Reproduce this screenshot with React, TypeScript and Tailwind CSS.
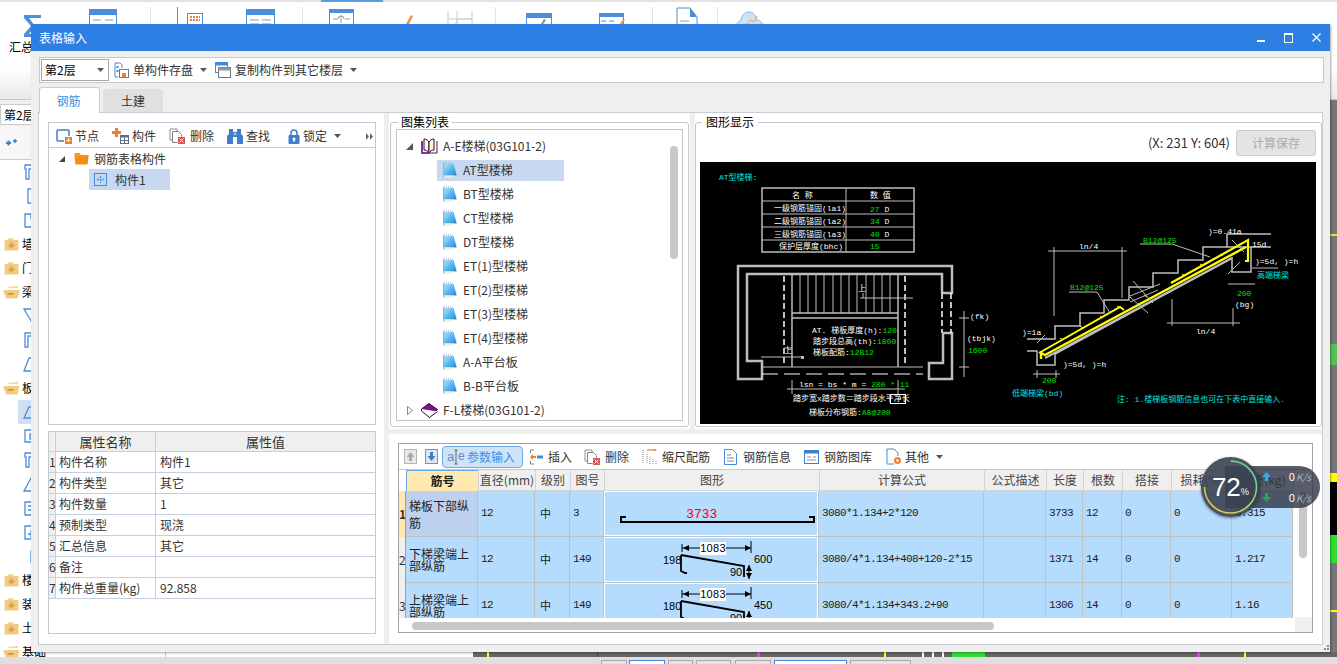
import type { ReactNode } from 'react';

const sans = "font-['Noto_Sans_CJK_SC',sans-serif]";

const Arrow = ({ className = '' }: { className?: string }) => (
  <svg width="7" height="4" viewBox="0 0 7 4" className={className}>
    <path d="M0 0h7L3.5 4z" fill="#555" />
  </svg>
);

const FolderPlus = () => (
  <svg width="15" height="14" viewBox="0 0 15 14" className="shrink-0">
    <path d="M4 1h5l1 2H4z" fill="#f3d9a4" />
    <rect x="0.500" y="3" width="14" height="10.500" fill="#f2cb83" />
    <path d="M6.500 5.500h2v2h2v2h-2v2h-2v-2h-2v-2h2z" fill="#d8a54c" />
  </svg>
);

const FolderMinus = () => (
  <svg width="17" height="14" viewBox="0 0 17 14" className="shrink-0">
    <path d="M5 2l10-1.500V3H5z" fill="#f3d9a4" />
    <path d="M0 5h16.500l-2 8.500H3z" fill="#f2cb83" />
    <rect x="4.500" y="8" width="6" height="2" fill="#d19a3c" />
  </svg>
);

const BlueTreeIcon = ({ d }: { d: string }) => (
  <svg width="16" height="16" viewBox="0 0 16 16" className="shrink-0">
    <path d={d} fill="none" stroke="#4a8fdc" strokeWidth="1.300" />
  </svg>
);

const Note = () => (
  <svg width="14" height="16" viewBox="0 0 14 16" className="shrink-0">
    <defs>
      <linearGradient id="noteFill" x1="0" y1="0" x2="1" y2="1">
        <stop offset="0" stopColor="#a6e6f8" />
        <stop offset="0.500" stopColor="#5ab8ec" />
        <stop offset="1" stopColor="#2a86d4" />
      </linearGradient>
    </defs>
    <path d="M1 2h9.500l3 10.500v1H1z" fill="url(#noteFill)" />
    <path d="M0.500 13.500h10l-1 2h-9z" fill="#e4ebef" />
    <path d="M1 1h9.500" stroke="#8fa3ad" strokeDasharray="1 1" />
    <path d="M0.500 1v14.500" stroke="#9fb2bb" />
  </svg>
);

const SaveIcon = () => (
  <svg width="15" height="16" viewBox="0 0 15 16">
    <path d="M1 1h5l2 2v3" fill="none" stroke="#3f8bdc" />
    <path d="M1 1v14h3" fill="none" stroke="#3f8bdc" />
    <rect x="2.500" y="4" width="2" height="2" fill="#3f8bdc" />
    <rect x="2.500" y="8" width="2" height="2" fill="#3f8bdc" />
    <rect x="5.500" y="7.500" width="9" height="8" fill="#fff" stroke="#6b7a8a" />
    <rect x="8" y="11" width="4" height="4" fill="#f0812a" />
  </svg>
);

const CopyIcon = () => (
  <svg width="16" height="16" viewBox="0 0 16 16">
    <rect x="0.500" y="0.500" width="12" height="10" fill="#fff" stroke="#3f8bdc" />
    <rect x="0.500" y="0.500" width="12" height="3" fill="#3f8bdc" />
    <rect x="3.500" y="5.500" width="12" height="10" fill="#fff" stroke="#6b7a8a" />
    <rect x="3.500" y="5.500" width="12" height="3" fill="#8b98a6" />
  </svg>
);

const NodeIcon = () => (
  <svg width="16" height="16" viewBox="0 0 16 16">
    <rect x="1" y="2" width="12" height="11" rx="1" fill="none" stroke="#3f7fc8" strokeWidth="1.500" />
    <rect x="8" y="8" width="8" height="8" fill="#fff" />
    <rect x="9" y="9" width="7" height="7" fill="#f0812a" />
    <path d="M12.500 10v4M10.500 12.500h4" stroke="#fff" />
  </svg>
);

const PartIcon = () => (
  <svg width="17" height="16" viewBox="0 0 17 16">
    <path d="M3 0h3v3h3v3H6v3H3V6H0V3h3z" fill="#f0812a" />
    <rect x="8.500" y="7.500" width="8" height="8" fill="#fff" stroke="#5a6f8a" />
    <rect x="8.500" y="7.500" width="8" height="2" fill="#5a6f8a" />
    <path d="M12.500 9.500v6M8.500 12.500h8" stroke="#5a6f8a" />
  </svg>
);

const DeleteIcon = () => (
  <svg width="16" height="16" viewBox="0 0 16 16">
    <path d="M1 1h7v2M1 1v11h2" fill="none" stroke="#8a939c" />
    <path d="M3.500 3.500h6l3 3v2M3.500 3.500v11h5" fill="#fff" stroke="#7b8590" />
    <rect x="9" y="9" width="7" height="7" fill="#d9534f" />
    <path d="M10.500 10.500l4 4M14.500 10.500l-4 4" stroke="#fff" />
  </svg>
);

const Binoculars = () => (
  <svg width="16" height="15" viewBox="0 0 16 15">
    <path d="M2 0h4v3h4V0h4v5l2 2v8h-6V8H6v7H0V7l2-2z" fill="#3f7fc8" />
    <rect x="6.500" y="4" width="3" height="2" fill="#9fc1e8" />
  </svg>
);

const Lock = () => (
  <svg width="12" height="15" viewBox="0 0 12 15">
    <path d="M3 6V4a3 3 0 0 1 6 0v2" fill="none" stroke="#3f7fc8" strokeWidth="1.600" />
    <rect x="0.500" y="6" width="11" height="9" rx="1" fill="#3f7fc8" />
    <circle cx="6" cy="10" r="1.500" fill="#fff" />
    <rect x="5.400" y="10" width="1.200" height="3" fill="#fff" />
  </svg>
);

const PartNode = () => (
  <svg width="13" height="13" viewBox="0 0 13 13">
    <rect x="0.500" y="0.500" width="12" height="12" fill="none" stroke="#3f8bdc" />
    <path d="M6.500 3v7M3 6.500h7" stroke="#3f8bdc" strokeDasharray="2 1" />
    <path d="M5 4.500L3 6.500l2 2M8 4.500l2 2-2 2" fill="none" stroke="#7fb2e8" />
  </svg>
);

const OrangeFolder = () => (
  <svg width="15" height="13" viewBox="0 0 15 13">
    <path d="M0.500 1h5l1.500 2h7.500v2H0.500z" fill="#f49a2c" />
    <path d="M0.500 4.500h14l-1 8h-12z" fill="#f58a14" />
  </svg>
);

const OpenBook = () => (
  <svg width="17" height="17" viewBox="0 0 17 17">
    <path d="M1 3v12h15V3" fill="#fff" stroke="#5c1466" />
    <path d="M3 1c2 0 4 1 5 3v11c-1-2-3-3-5-3z" fill="#fff" stroke="#2a0a30" />
    <path d="M13 1c-2 0-4 1-5 3v11c1-2 3-3 5-3z" fill="#fff7c8" stroke="#2a0a30" />
    <path d="M1 3v12h7" fill="none" stroke="#7a1a8a" strokeWidth="1.500" />
  </svg>
);

const ClosedBook = () => (
  <svg width="17" height="15" viewBox="0 0 17 15">
    <path d="M0.500 6L8 0.500l8.500 6-8 8z" fill="#7d1385" stroke="#3a0a40" />
    <path d="M0.500 6v2l8 6.500 8-6" fill="#fff" stroke="#3a0a40" />
  </svg>
);

const ParamIcon = () => (
  <svg width="20" height="16" viewBox="0 0 20 16">
    <text x="0" y="12" fontSize="13" fill="#5a8fc8" fontFamily="Liberation Sans">a</text>
    <text x="11" y="11" fontSize="12" fill="#5a8fc8" fontFamily="Liberation Sans">e</text>
    <path d="M7.500 1h3M9 1v14M7.500 15h3" stroke="#666" fill="none" />
  </svg>
);

const InsertIcon = () => (
  <svg width="14" height="16" viewBox="0 0 14 16">
    <path d="M5 1H1.500v3M5 15H1.500v-3" fill="none" stroke="#7b8590" />
    <path d="M1 8l3-3v2h3v2H4v2z" fill="#f0812a" />
    <rect x="8" y="6.500" width="6" height="3" fill="#3f8bdc" />
  </svg>
);

const ScaleIcon = () => (
  <svg width="16" height="15" viewBox="0 0 16 15">
    <path d="M5 1h9" stroke="#f0812a" strokeWidth="1.200" />
    <path d="M12 0l3 1-3 1z" fill="#f0812a" />
    <path d="M1 1v14M5 5v10M8 8v7M11 10v5M14 12v3" stroke="#7b8590" strokeDasharray="1 1" />
  </svg>
);

const DocIcon = () => (
  <svg width="13" height="16" viewBox="0 0 13 16">
    <path d="M0.500 0.500h8l4 4v11h-12z" fill="#fff" stroke="#3f8bdc" />
    <path d="M3 6h4M3 9h7M3 12h7" stroke="#7b8590" />
  </svg>
);

const LibraryIcon = () => (
  <svg width="15" height="14" viewBox="0 0 15 14">
    <rect x="0.500" y="0.500" width="14" height="13" fill="#fff" stroke="#3f7fc8" />
    <rect x="0.500" y="0.500" width="14" height="3" fill="#3f7fc8" />
    <path d="M3 7h4M3 10h9" stroke="#8a939c" />
    <path d="M9 7h3" stroke="#f0812a" />
  </svg>
);

const OtherIcon = () => (
  <svg width="16" height="17" viewBox="0 0 16 17">
    <path d="M8 16H1V1h7l4 4v3" fill="#fff" stroke="#3f8bdc" />
    <circle cx="11.500" cy="12.500" r="3.500" fill="#f0812a" />
    <circle cx="11.500" cy="12.500" r="1.300" fill="#fff" />
  </svg>
);

const MoveIcon = ({ dir, active }: { dir: 'up' | 'down'; active?: boolean }) => (
  <svg width="13" height="15" viewBox="0 0 13 15">
    <rect x="0.500" y="0.500" width="12" height="14" fill={active ? '#dbe7f3' : '#e8e8e8'} stroke={active ? '#7b94ad' : '#b5b5b5'} />
    <path
      d={dir === 'up' ? 'M6.500 3L10.500 8H8v4H5V8H2.500z' : 'M6.500 12L10.500 7H8V3H5v4H2.500z'}
      fill={active ? '#3f7fc8' : '#a8a8a8'}
    />
  </svg>
);

const RibbonIcon = ({ children, w, className = '' }: { children: ReactNode; w: number; className?: string }) => (
  <svg width={w} height="24" viewBox={`0 0 ${w} 24`} className={className}>
    {children}
  </svg>
);

const Tool = ({ icon, label, className = '' }: { icon: ReactNode; label: string; className?: string }) => (
  <div className={`flex items-center shrink-0 ${className}`}>
    {icon}
    <span className="text-[12px] text-[#333] whitespace-nowrap">{label}</span>
  </div>
);

const treeIcons = [
  'M2 1h12v4H6v10H3V5H2z',
  'M5 1h8v6H9v8H5z',
  'M2 2h6v4h6v9H2z',
];

const LeftTree = () => {
  const rows: { folder?: 'plus' | 'minus'; label?: string; icon?: string; active?: boolean }[] = [
    { icon: treeIcons[0] }, { icon: treeIcons[1] }, { icon: treeIcons[2] },
    { folder: 'plus', label: '墙体' }, { folder: 'plus', label: '门窗' }, { folder: 'minus', label: '梁' },
    { icon: 'M1 1h14L9 9v6L7 11z' }, { icon: 'M2 1h13v3H5v11H2z' }, { icon: 'M1 15L6 2h8v13z' },
    { folder: 'minus', label: '板' },
    { icon: 'M1 14L6 3h9v11z', active: true }, { icon: 'M2 2h12v12H2zM7 6h6v5H7z' }, { icon: treeIcons[0] },
    { icon: 'M1 15L8 2h6v13z' }, { icon: 'M2 2h12v13H2zM5 6h8M5 10h8' }, { icon: 'M2 2h12v13H2zM8 6v8M5 10h8' },
    { icon: 'M8 3h4v11H8z' },
    { folder: 'plus', label: '楼梯' }, { folder: 'plus', label: '装修' }, { folder: 'plus', label: '土方' },
    { folder: 'minus', label: '基础' },
  ];
  return (
    <div className="flex flex-col">
      {rows.map((r, i) => (
        <div key={i} className="h-[24px] flex items-center shrink-0">
          {r.folder ? (
            <div className="flex items-center">
              <div className="w-[22px] flex justify-center">{r.folder === 'plus' ? <FolderPlus /> : <FolderMinus />}</div>
              <span className="text-[12px] text-black">{r.label}</span>
            </div>
          ) : (
            <div className={`ml-[18px] h-[24px] w-[60px] pl-[5px] flex items-center ${r.active ? 'bg-[#cfe0f5]' : ''}`}>
              <BlueTreeIcon d={r.icon ?? ''} />
            </div>
          )}
        </div>
      ))}
    </div>
  );
};

const Background = () => (
  <div className="absolute inset-0 flex flex-col bg-white">
    <div className="h-[100px] shrink-0 flex flex-col bg-gradient-to-b from-white from-70% to-[#e8e8e8] border-b border-[#c8c8c8]">
      <div className="h-[2px] shrink-0 bg-[#e2e2e2] flex">
        <div className="ml-[321px] w-[62px] bg-[#5a9be6]" />
      </div>
      <div className="flex items-start h-[30px] pt-[5px]">
        <svg width="20" height="24" viewBox="0 0 20 24" className="ml-[23px] mt-[7px]">
          <path d="M1 1h17v3H6l6 8-6 8h12v3H1v-3l7-8-7-8z" fill="#4a8fdc" />
        </svg>
        <RibbonIcon w={28} className="ml-[46px]">
          <rect x="0.500" y="2.500" width="27" height="20" fill="#fff" stroke="#4a8fdc" />
          <rect x="0" y="2" width="28" height="6" fill="#4a8fdc" />
          <path d="M4 13h8M16 13h8" stroke="#999" />
        </RibbonIcon>
        <div className="ml-[33px] w-px h-[30px] bg-[#e4e4e4]" />
        <div className="ml-[26px] w-px h-[20px] bg-[#4a8fdc]" />
        <RibbonIcon w={16} className="ml-[9px]">
          <rect x="0.500" y="6.500" width="15" height="17" fill="#fff" stroke="#4a8fdc" />
          <path d="M3 10h10M3 13h10" stroke="#e8853a" strokeWidth="2" strokeDasharray="2 1" />
        </RibbonIcon>
        <RibbonIcon w={29} className="ml-[43px]">
          <rect x="0.500" y="2.500" width="28" height="20" fill="#fff" stroke="#4a8fdc" />
          <rect x="0" y="2" width="29" height="6" fill="#4a8fdc" />
          <path d="M4 13h9M16 13h9M4 17h9M16 17h9" stroke="#999" />
        </RibbonIcon>
        <div className="ml-[27px] w-px h-[30px] bg-[#e4e4e4]" />
        <RibbonIcon w={25} className="ml-[26px]">
          <rect x="0.500" y="2.500" width="24" height="20" fill="#fff" stroke="#4a8fdc" />
          <rect x="0" y="2" width="25" height="4" fill="#4a8fdc" />
          <path d="M4 12h5M16 12h5M12 8v8M9 12a3 3 0 0 1 6 0" fill="none" stroke="#999" />
        </RibbonIcon>
        <RibbonIcon w={8} className="ml-[51px]">
          <path d="M1 17l5-9 2 1-4 8z" fill="#f0923f" />
        </RibbonIcon>
        <RibbonIcon w={26} className="ml-[34px]">
          <path d="M1 4v20M10 4v20M25 4v20M1 12h24M5 24l6-12h14" stroke="#ccc" fill="none" />
        </RibbonIcon>
        <div className="ml-[22px] w-px h-[30px] bg-[#e4e4e4]" />
        <RibbonIcon w={26} className="ml-[30px]">
          <rect x="0.500" y="6.500" width="25" height="18" fill="#fff" stroke="#4a8fdc" />
          <rect x="0" y="6" width="26" height="5" fill="#4a8fdc" />
          <path d="M15 17l3-5 2 1-3 4z" fill="#6aa84f" />
        </RibbonIcon>
        <RibbonIcon w={27} className="ml-[47px]">
          <rect x="0.500" y="6.500" width="24" height="18" fill="#fff" stroke="#4a8fdc" />
          <rect x="0" y="6" width="25" height="4" fill="#4a8fdc" />
          <path d="M2 14h5M10 14h5" stroke="#4a8fdc" />
          <path d="M21 17l3-5 2 1-3 5z" fill="#f0923f" />
        </RibbonIcon>
        <div className="ml-[26px] w-px h-[30px] bg-[#e4e4e4]" />
        <RibbonIcon w={22} className="ml-[23px]">
          <path d="M1 1h13l7 9v14H1z" fill="#fff" stroke="#4a8fdc" />
          <path d="M14 1l7 9h-7z" fill="#4a8fdc" />
          <path d="M4 14h9" stroke="#999" />
        </RibbonIcon>
        <div className="ml-[19px] w-px h-[30px] bg-[#e4e4e4]" />
        <RibbonIcon w={30} className="ml-[17px]">
          <path d="M2 22c-2-4 1-8 4-8 0-6 4-9 8-9 5 0 7 4 8 8 4 0 7 5 6 9z" fill="#cfe2f7" stroke="#8ab8ea" />
          <path d="M12 17l4-4 3 2 3-6" fill="none" stroke="#f0a060" />
        </RibbonIcon>
      </div>
      <div className="ml-[9px] mt-[6px] text-[12px] text-black">汇总</div>
    </div>
    <div className="flex-1 flex min-h-0 overflow-hidden">
      <div className="w-[166px] shrink-0 flex flex-col border-r border-[#c8c8c8]">
        <div className="h-[26px] shrink-0 flex items-center pt-[2px] bg-[#f0f0f0]">
          <div className="w-[60px] h-[21px] bg-white border border-[#ccc] pl-[3px] text-[12px] leading-[19px] text-black">第2层</div>
        </div>
        <div className="h-[34px] shrink-0 flex items-center pl-[4px] border-b border-[#ccc] bg-[#f7f7f7]">
          <svg width="14" height="10" viewBox="0 0 14 10">
            <path d="M2 5h5M4.500 2.500v5" stroke="#3f7fc8" strokeWidth="2" />
            <path d="M9 3h4M11 1v4" stroke="#3f7fc8" strokeWidth="1.500" />
          </svg>
        </div>
        <LeftTree />
      </div>
      <div className="flex-1 min-w-0 ml-[6px] flex flex-col">
        <div className="flex-1 flex justify-end">
          <div className="w-[7px] flex flex-col bg-[#777]">
            <div className="h-[134px] shrink-0" />
            <div className="h-[2px] shrink-0 bg-[#e6e04a]" />
            <div className="h-[108px] shrink-0" />
            <div className="h-[21px] shrink-0 bg-[#58c058]" />
            <div className="h-[108px] shrink-0" />
            <div className="h-[9px] shrink-0 bg-[#ffff00]" />
            <div className="h-[53px] shrink-0 bg-black" />
            <div className="h-[18px] shrink-0 bg-[#33dd33]" />
            <div className="h-[10px] shrink-0 bg-[#33dd33]" />
            <div className="h-[47px] shrink-0" />
            <div className="h-[2px] shrink-0 bg-[#ffff00]" />
          </div>
        </div>
        <div className="h-[5px] shrink-0 flex">
          <div className="w-[301px] bg-white" />
          <div className="flex-1 flex bg-[#666]">
            <div className="ml-[14px] w-[2px] bg-[#ffff33]" />
            <div className="ml-[108px] w-px bg-[#a02020]" />
            <div className="ml-[159px] w-[3px] bg-[#ff33ff]" />
            <div className="ml-[124px] w-[2px] bg-[#ffff33]" />
            <div className="ml-[36px] w-[2px] bg-white" />
            <div className="ml-[8px] w-[2px] bg-white" />
            <div className="ml-[8px] w-[2px] bg-white" />
            <div className="ml-[8px] w-[33px] bg-[#33dd33]" />
            <div className="ml-[212px] w-[3px] bg-[#ff33ff]" />
            <div className="ml-[44px] w-[2px] bg-[#ffff33]" />
          </div>
        </div>
      </div>
    </div>
    <div className="h-[7px] shrink-0 bg-[#dfdfdf] flex items-end pt-[3px] overflow-hidden">
      <div className="ml-[601px] w-[26px] h-[4px] bg-[#e4e4e4] border border-b-0 border-[#aaa]" />
      <div className="ml-[2px] w-[36px] h-[4px] bg-white border border-b-0 border-[#3f8bdc]" />
      <div className="ml-[3px] w-[25px] h-[4px] bg-[#e4e4e4] border border-b-0 border-[#aaa]" />
      <div className="ml-[3px] w-[35px] h-[4px] bg-[#e4e4e4] border border-b-0 border-[#aaa]" />
      <div className="ml-[4px] w-[36px] h-[4px] bg-[#e4e4e4] border border-b-0 border-[#aaa]" />
      <div className="ml-[3px] w-[73px] h-[4px] bg-white border border-b-0 border-[#3f8bdc]" />
      <div className="ml-[3px] w-[61px] h-[4px] bg-[#e4e4e4] border border-b-0 border-[#aaa]" />
    </div>
  </div>
);

const CadDrawing = () => {
  const g = '#bdbdbd';
  const cad = { fontFamily: '"Liberation Mono","Noto Sans CJK SC",monospace', fontSize: 8 };
  const treads = [100, 108, 116, 124, 133, 141, 149, 157, 166, 174, 182, 190];
  return (
    <svg width="616" height="262" viewBox="0 0 616 262" className="block bg-black" style={cad}>
      <text x="19" y="18" fill="#00e5e5">AT型楼梯:</text>
      <rect x="62" y="26" width="152" height="64" fill="none" stroke={g} strokeWidth="1.500" />
      <path d="M146 26v64M62 39h152M62 52h152M62 65h152M62 78h152" stroke={g} fill="none" />
      <text x="92" y="36" fill="#fff">名  称</text>
      <text x="170" y="36" fill="#fff">数  值</text>
      <text x="74" y="49" fill="#fff">一级钢筋锚固(la1)</text>
      <text x="170" y="50" fill="#00e000">27 <tspan fill="#fff">D</tspan></text>
      <text x="74" y="62" fill="#fff">二级钢筋锚固(la2)</text>
      <text x="170" y="62" fill="#00e000">34 <tspan fill="#fff">D</tspan></text>
      <text x="74" y="75" fill="#fff">三级钢筋锚固(la3)</text>
      <text x="170" y="75" fill="#00e000">40 <tspan fill="#fff">D</tspan></text>
      <text x="79" y="87" fill="#fff">保护层厚度(bhc)</text>
      <text x="170" y="87" fill="#00e000">15</text>

      <g fill="none" stroke={g} strokeWidth="2.500">
        <path d="M242 131H252V104H38V217H62V199H47V112H242V131" />
        <path d="M243 171H252V217H229V201H243V171" />
      </g>
      <path d="M242 131v40M251 131v40M84 114v90M205 114v90" stroke="#fff" strokeWidth="1.500" strokeDasharray="6 3" />
      <path d="M92 112v93M198 112v93" stroke={g} strokeWidth="1.500" />
      <path d="M92 151h106M92 156h106" stroke={g} strokeWidth="1.500" />
      {treads.map(x => (
        <path key={x} d={`M${x} 112v39`} stroke={g} />
      ))}
      <path d="M62 205h161" stroke={g} />
      <path d="M62 212h161" stroke="#fff" strokeDasharray="16 6" />
      <path d="M160 136h53M163 131v5M61 195h42M84 186h8" stroke={g} />
      <text x="158" y="129" fill="#fff">上</text>
      <text x="84" y="191" fill="#fff">上</text>
      <rect x="101" y="194" width="3" height="3" fill={g} />
      <text x="112" y="171" fill="#fff">AT. 梯板厚度(h):<tspan fill="#00e000">120</tspan></text>
      <text x="113" y="182" fill="#fff">踏步段总高(th):<tspan fill="#00e000">1800</tspan></text>
      <text x="113" y="193" fill="#fff">梯板配筋:<tspan fill="#00e000">12B12</tspan></text>
      <path d="M264 149v66M259 156h10M259 205h10" stroke={g} />
      <text x="270" y="157" fill="#fff">(fk)</text>
      <text x="267" y="179" fill="#fff">(tbjk)</text>
      <text x="268" y="191" fill="#00e000">1600</text>
      <path d="M92 218v14M198 218v14M87 227h118" stroke={g} />
      <text x="99" y="225" fill="#fff">lsn = bs * m = <tspan fill="#00e000">280 * 11</tspan></text>
      <text x="93" y="239" fill="#fff">踏步宽x踏步数＝踏步段水平净长</text>
      <rect x="190.500" y="232.500" width="15" height="9" fill="none" stroke="#fff" />
      <text x="109" y="253" fill="#fff">梯板分布钢筋:<tspan fill="#00e000">A8@200</tspan></text>

      <path d="M327 177H355V164H380V151H404V138H429V125H453V111H478V98H503V85H527V72H571M527 85H571" fill="none" stroke={g} strokeWidth="1.500" />
      <path d="M327 189H337V203H355V192L532 96V110H551V85" fill="none" stroke={g} strokeWidth="1.500" />
      <path d="M345 196L532 96" stroke={g} strokeWidth="2" />
      <g fill="none" stroke="#ffff00" strokeWidth="2">
        <path d="M341 197V191L345 193L546 85" strokeWidth="2.400" />
        <path d="M339 191L420 145L424 148" />
        <path d="M471 121L548 78V99H545" strokeWidth="2.200" />
      </g>
      <path d="M360 176l3 2M380 164l3 2M400 154l3 2M417 144l3 2M444 133l3 2M482 112l3 2M500 102l3 2M520 92l3 2" stroke="#ffff00" />
      <path d="M433 119l20 22M460 122l-30 12M458 128l-28 12M430 135l18 16" stroke={g} />
      <path d="M345 173l-8 8M532 78l12 12M540 100l-12 12M369 130h28l13 21M440 82h32l38 13" stroke={g} fill="none" />
      <text x="370" y="128" fill="#00e000">B12@125</text>
      <text x="443" y="81" fill="#00e000">B12@125</text>
      <path d="M348 89h79M354 85v69M422 85v51" stroke={g} />
      <text x="379" y="87" fill="#fff">ln/4</text>
      <path d="M467 161h73M472 137v27M533 146v18" stroke={g} />
      <text x="496" y="172" fill="#fff">ln/4</text>
      <text x="322" y="173" fill="#fff">)=1a</text>
      <text x="508" y="72" fill="#fff">)=0.41a</text>
      <text x="552" y="85" fill="#fff">15d</text>
      <text x="555" y="102" fill="#fff">)=5d, )=h</text>
      <path d="M552 106h26M528 122h27M333 212h27M337 208v8M356 208v8" stroke={g} />
      <text x="557" y="116" fill="#00e5e5">高端梯梁</text>
      <text x="537" y="134" fill="#00e000">200</text>
      <text x="535" y="145" fill="#fff">(bg)</text>
      <text x="363" y="205" fill="#fff">)=5d, )=h</text>
      <text x="342" y="221" fill="#00e000">200</text>
      <text x="312" y="234" fill="#00e5e5">低端梯梁(bd)</text>
      <text x="417" y="240" fill="#00e5e5">注: 1.楼梯板钢筋信息也可在下表中直接输入.</text>
    </svg>
  );
};

const Fig1 = () => (
  <svg width="214" height="44" viewBox="0 0 214 44" className="block">
    <text x="97" y="26" textAnchor="middle" fontSize="13" fontFamily="Liberation Sans" fill="#ff0000" letterSpacing="0.500">3733</text>
    <path d="M21 25h-5v5h193v-5h-5" fill="none" stroke="#000" strokeWidth="2" />
  </svg>
);

const FigBent = ({ a, b, c, d }: { a: string; b: string; c: string; d: string }) => (
  <svg width="214" height="44" viewBox="0 0 214 44" className="block" fontFamily="Liberation Sans" fontSize="11">
    <path d="M77 10h69M77 6v8M146 3v12" stroke="#000" fill="none" />
    <path d="M78 10l6-3v6zM146 10l-6-3v6z" fill="#000" />
    <rect x="95" y="4" width="26" height="13" fill="#fff" />
    <text x="108" y="14" textAnchor="middle" letterSpacing="0.300">{a}</text>
    <path d="M76 17l63 11v11" fill="none" stroke="#000" strokeWidth="1.800" />
    <path d="M76 17v16l4 2h2" fill="none" stroke="#000" strokeWidth="1.800" />
    <path d="M144 27v14" stroke="#000" />
    <path d="M141 33l3-6 3 6zM141 35l3 6 3-6z" fill="#000" />
    <text x="58" y="26">{b}</text>
    <text x="149" y="25">{c}</text>
    <text x="125" y="38">{d}</text>
  </svg>
);

const rows = [
  { no: '1', name: '梯板下部纵筋', dia: '12', grade: '中', fig: '3', shape: <Fig1 />, formula: '3080*1.134+2*120', len: '3733', count: '12', weight: '3.315', tall: true },
  { no: '2', name: '下梯梁端上部纵筋', dia: '12', grade: '中', fig: '149', shape: <FigBent a="1083" b="198" c="600" d="90" />, formula: '3080/4*1.134+408+120-2*15', len: '1371', count: '14', weight: '1.217' },
  { no: '3', name: '上梯梁端上部纵筋', dia: '12', grade: '中', fig: '149', shape: <FigBent a="1083" b="180" c="450" d="90" />, formula: '3080/4*1.134+343.2+90', len: '1306', count: '14', weight: '1.16' },
];

const headers = ['直径(mm)', '级别', '图号', '图形', '计算公式', '公式描述', '长度', '根数', '搭接', '损耗(%)', '单重(kg)'];
const cols = 'grid grid-cols-[7px_72px_57px_35px_34px_215px_165px_62px_37px_39px_49px_61px_61px]';
const mono = "font-['Liberation_Mono',monospace] text-[11px] tracking-[-0.6px] text-[#222] px-[3px]";
const cell = 'border-r border-b border-[#c0c0c0] bg-[#b5dbfd] flex items-center overflow-hidden';

const SteelGrid = () => (
  <div className="w-[896px] h-[148px] overflow-hidden">
    <div className={`${cols} h-[21px] bg-[#efefef]`}>
      <div className="bg-white" />
      <div className="bg-[#ffe9b0] border-t border-l border-[#6aa9ea] flex items-center justify-center text-[12px] font-bold text-[#222]">筋号</div>
      {headers.map(h => (
        <div key={h} className="border-l border-[#d4d4d4] border-b flex items-center justify-center text-[12px] text-[#444] whitespace-nowrap overflow-hidden">{h}</div>
      ))}
    </div>
    {rows.map(r => (
      <div key={r.no} className={`${cols} h-[46px]`}>
        <div className={`flex items-center text-[12px] text-[#333] border-r border-[#6aa9ea] ${r.tall ? 'bg-[#ffe9b0] font-bold' : 'bg-[#efefef]'}`}>{r.no}</div>
        <div className={`${cell} px-[3px] text-[12px] ${r.tall ? 'leading-[17px] !bg-[#bdd0ee]' : 'leading-[12px]'} text-[#222]`}>{r.name}</div>
        <div className={`${cell} ${mono}`}>{r.dia}</div>
        <div className={`${cell} pl-[5px] text-[11px] text-[#222]`}>{r.grade}</div>
        <div className={`${cell} ${mono}`}>{r.fig}</div>
        <div className="border-r border-b border-[#c0c0c0] bg-[#b5dbfd] overflow-hidden"><div className="border border-white h-[45px]">{r.shape}</div></div>
        <div className={`${cell} ${mono}`}>{r.formula}</div>
        <div className={cell} />
        <div className={`${cell} ${mono}`}>{r.len}</div>
        <div className={`${cell} ${mono}`}>{r.count}</div>
        <div className={`${cell} ${mono}`}>0</div>
        <div className={`${cell} ${mono}`}>0</div>
        <div className={`${cell} ${mono}`}>{r.weight}</div>
      </div>
    ))}
  </div>
);

const props = [
  ['1', '构件名称', '构件1'],
  ['2', '构件类型', '其它'],
  ['3', '构件数量', '1'],
  ['4', '预制类型', '现浇'],
  ['5', '汇总信息', '其它'],
  ['6', '备注', ''],
  ['7', '构件总重量(kg)', '92.858'],
];

const PropTable = () => (
  <div className="mt-[6px] w-[328px] h-[203px] border border-[#c4c8d0]">
    <div className="grid grid-cols-[7px_100px_1fr] h-[20px] bg-[#efefef] text-[13px] text-[#333] leading-[19px] text-center border-b border-[#c5cfe0]">
      <div className="border-r border-[#c5cfe0]" />
      <div className="border-r border-[#c5cfe0]">属性名称</div>
      <div>属性值</div>
    </div>
    {props.map(p => (
      <div key={p[0]} className="grid grid-cols-[7px_100px_1fr] h-[21px] text-[12px] text-[#333] leading-[20px] border-b border-[#c5cfe0]">
        <div className="bg-[#efefef] border-r border-[#c5cfe0]">{p[0]}</div>
        <div className="pl-[3px] border-r border-[#c5cfe0] whitespace-nowrap">{p[1]}</div>
        <div className="pl-[4px]">{p[2]}</div>
      </div>
    ))}
  </div>
);

const stairs = ['AT型楼梯', 'BT型楼梯', 'CT型楼梯', 'DT型楼梯', 'ET(1)型楼梯', 'ET(2)型楼梯', 'ET(3)型楼梯', 'ET(4)型楼梯', 'A-A平台板', 'B-B平台板'];

const StairList = () => (
  <fieldset className="w-[299px] h-[313px] ml-px mt-px border border-[#c8c8c8] rounded-[3px] px-[5px]">
    <legend className="ml-[2px] px-[3px] text-[12px] leading-[16px] text-black">图集列表</legend>
    <div className="relative h-[292px] -mt-px border border-[#c4c4c4] pt-[4px] text-[12px] text-[#333] overflow-hidden">
      <div className="h-[24px] flex items-center pl-[9px]">
        <svg width="7" height="7" viewBox="0 0 7 7"><path d="M7 0v7H0z" fill="#555" /></svg>
        <div className="ml-[8px] mr-[5px] flex"><OpenBook /></div>
        A-E楼梯(03G101-2)
      </div>
      {stairs.map((s, i) => (
        <div key={s} className="h-[24px] flex items-center pl-[40px]">
          <div className={`flex items-center h-[21px] w-[127px] ${i === 0 ? 'bg-[#c7d8f0]' : ''}`}>
            <div className="ml-[6px] mr-[6px] flex"><Note /></div>
            {s}
          </div>
        </div>
      ))}
      <div className="h-[24px] flex items-center pl-[10px]">
        <svg width="6" height="9" viewBox="0 0 6 9"><path d="M0.500 0.500l5 4-5 4z" fill="#fff" stroke="#888" /></svg>
        <div className="ml-[8px] mr-[5px] flex"><ClosedBook /></div>
        F-L楼梯(03G101-2)
      </div>
      <div className="absolute right-[4px] top-[16px] w-[8px] h-[113px] rounded-full bg-[#c8c8c8]" />
    </div>
  </fieldset>
);

const Widget = () => (
  <>
    <div className="absolute left-[1225px] top-[466px] w-[95px] h-[42px] rounded-r-[21px] bg-[#2e3543]/80 flex flex-col pl-[37px] pr-[9px] justify-center gap-[3px] text-white">
      <div className="flex items-center h-[18px]">
        <svg width="9" height="9" viewBox="0 0 9 9"><path d="M4.500 0L9 5H6v4H3V5H0z" fill="#39a9ee" /></svg>
        <span className="ml-auto text-[11px]">0</span>
        <span className="ml-[1px] text-[10px] italic text-[#a8afbc]">K/s</span>
      </div>
      <div className="flex items-center h-[18px]">
        <svg width="9" height="9" viewBox="0 0 9 9"><path d="M4.500 9L0 4h3V0h3v4h3z" fill="#2aa84a" /></svg>
        <span className="ml-auto text-[11px]">0</span>
        <span className="ml-[1px] text-[10px] italic text-[#a8afbc]">K/s</span>
      </div>
    </div>
    <div className="absolute left-[1201px] top-[457px] w-[59px] h-[60px] rounded-full bg-[#3a4151]/90 shadow-[0_1px_3px_rgba(0,0,0,0.5)] flex items-center justify-center text-white">
      <svg width="59" height="60" viewBox="0 0 59 60" className="absolute inset-0">
        <defs>
          <linearGradient id="ringFill" x1="0" y1="1" x2="1" y2="0">
            <stop offset="0" stopColor="#f5c542" />
            <stop offset="0.600" stopColor="#a8d86a" />
            <stop offset="1" stopColor="#38d6c0" />
          </linearGradient>
        </defs>
        <path d="M29.500 4A26 26 0 1 1 3.500 30" fill="none" stroke="url(#ringFill)" strokeWidth="1.500" />
      </svg>
      <span className="text-[26px] leading-none font-['Liberation_Sans',sans-serif] font-light">72</span>
      <span className="text-[9px] mt-[10px]">%</span>
    </div>
  </>
);

export default function App() {
  return (
    <div className={`relative w-[1337px] h-[664px] overflow-hidden ${sans}`}>
      <Background />
      <div className="absolute left-[31px] top-[24px] w-[1299px] h-[628px] flex flex-col bg-[#efefef] shadow-[1px_1px_2px_rgba(0,0,0,0.35)]">
        <div className="h-[27px] shrink-0 bg-[#2d7fe3] flex items-center pl-[8px] pr-[9px] text-[12px] text-white">
          <span>表格输入</span>
          <svg width="8" height="8" viewBox="0 0 8 8" className="ml-auto"><rect y="6" width="8" height="2" fill="#fff" /></svg>
          <svg width="9" height="10" viewBox="0 0 9 10" className="ml-[19px]"><rect x="0.500" y="0.500" width="8" height="9" fill="none" stroke="#fff" /><rect width="9" height="2" fill="#fff" /></svg>
          <svg width="9" height="9" viewBox="0 0 9 9" className="ml-[19px]"><path d="M0.500 0.500l8 8M8.500 0.500l-8 8" stroke="#fff" strokeWidth="1.200" /></svg>
        </div>
        <div className="mt-[6px] ml-[8px] mr-[6px] h-[26px] shrink-0 bg-white border border-[#c8c8c8] flex items-center pl-px">
          <div className="w-[68px] h-[22px] border border-[#a8a8a8] flex items-center pl-[3px] pr-[4px] text-[12px] text-black">
            第2层
            <Arrow className="ml-auto" />
          </div>
          <div className="ml-[5px] flex"><SaveIcon /></div>
          <span className="ml-[4px] text-[12px] text-[#333]">单构件存盘</span>
          <Arrow className="ml-[7px]" />
          <div className="ml-[8px] flex"><CopyIcon /></div>
          <span className="ml-[4px] text-[12px] text-[#333]">复制构件到其它楼层</span>
          <Arrow className="ml-[7px]" />
        </div>
        <div className="mt-[5px] ml-[8px] h-[25px] shrink-0 flex gap-[3px] items-end relative z-10 -mb-px">
          <div className="w-[61px] h-[26px] bg-white border border-b-0 border-[#c8ccd4] rounded-t-[3px] flex items-center justify-center pr-[2px] text-[12px] text-[#3a8ee6]">钢筋</div>
          <div className="w-[60px] h-[23px] mb-px bg-[#e0e0e0] rounded-t-[2px] flex items-center justify-center text-[12px] text-[#333]">土建</div>
        </div>
        <div className="mx-[7px] h-[533px] shrink-0 bg-white border border-[#c8ccd4] flex">
          <div className="w-[345px] shrink-0 pl-[9px] pt-[9px]">
            <div className="w-[328px] h-[303px] border border-[#c4c8d0] flex flex-col">
              <div className="h-[25px] shrink-0 border-b border-[#c4c8d0] flex items-center pt-[2px]">
                <Tool className="ml-[7px] gap-[3px]" icon={<NodeIcon />} label="节点" />
                <Tool className="ml-[13px] gap-[3px]" icon={<PartIcon />} label="构件" />
                <Tool className="ml-[13px] gap-[5px]" icon={<DeleteIcon />} label="删除" />
                <Tool className="ml-[13px] gap-[3px]" icon={<Binoculars />} label="查找" />
                <Tool className="ml-[18px] gap-[3px]" icon={<Lock />} label="锁定" />
                <Arrow className="ml-[7px]" />
                <svg width="7" height="7" viewBox="0 0 7 7" className="ml-[25px]"><path d="M0 0l3 3.500L0 7zM4 0l3 3.500L4 7z" fill="#666" /></svg>
              </div>
              <div className="h-[21px] flex items-center pl-[10px] text-[12px] text-[#333]">
                <svg width="6" height="6" viewBox="0 0 6 6"><path d="M6 0v6H0z" fill="#444" /></svg>
                <div className="ml-[9px] mr-[5px] flex"><OrangeFolder /></div>
                钢筋表格构件
              </div>
              <div className="ml-[40px] w-[81px] h-[21px] bg-[#c7d8f0] flex items-center pl-[5px] gap-[8px] text-[12px] text-[#333]">
                <PartNode />
                构件1
              </div>
            </div>
            <PropTable />
          </div>
          <div className="w-[5px] shrink-0 bg-[#efefef]" />
          <div className="flex-1 min-w-0 flex flex-col">
            <div className="h-[316px] shrink-0 flex">
              <div className="w-[301px] shrink-0"><StairList /></div>
              <div className="w-[5px] shrink-0 bg-[#efefef]" />
              <div className="flex-1 min-w-0">
                <fieldset className="h-[313px] mt-px border border-[#c8c8c8] rounded-[3px]">
                  <legend className="ml-[6px] px-[4px] text-[12px] leading-[16px] text-black">图形显示</legend>
                  <div className="flex items-center justify-end h-[26px] mr-[5px] text-[13px] text-[#333]">
                    <span>(X: 231 Y: 604)</span>
                    <div className="ml-[6px] w-[80px] h-[26px] bg-[#e4e4e4] border border-[#c8ccd4] rounded-[3px] flex items-center justify-center text-[12px] text-[#aaa]">计算保存</div>
                  </div>
                  <div className="mt-[6px] ml-[4px]"><CadDrawing /></div>
                </fieldset>
              </div>
            </div>
            <div className="h-[5px] shrink-0 bg-[#efefef]" />
            <div className="flex-1 pl-[9px] pt-[9px]">
              <div className="w-[915px] h-[190px] border border-[#a0a4a8] flex flex-col">
                <div className="h-[25px] shrink-0 flex items-center">
                  <div className="ml-[5px] flex"><MoveIcon dir="up" /></div>
                  <div className="ml-[8px] flex"><MoveIcon dir="down" active /></div>
                  <div className="ml-[4px] w-[81px] h-[22px] bg-[#cfe3f7] border border-[#6aa9ea] rounded-[4px] flex items-center pl-[4px] text-[12px] text-[#3a8ee6]">
                    <ParamIcon />
                    参数输入
                  </div>
                  <Tool className="ml-[6px] gap-[5px]" icon={<InsertIcon />} label="插入" />
                  <Tool className="ml-[12px] gap-[5px]" icon={<DeleteIcon />} label="删除" />
                  <Tool className="ml-[13px] gap-[4px]" icon={<ScaleIcon />} label="缩尺配筋" />
                  <Tool className="ml-[14px] gap-[6px]" icon={<DocIcon />} label="钢筋信息" />
                  <Tool className="ml-[13px] gap-[5px]" icon={<LibraryIcon />} label="钢筋图库" />
                  <Tool className="ml-[14px] gap-[3px]" icon={<OtherIcon />} label="其他" />
                  <Arrow className="ml-[7px]" />
                </div>
                <div className="flex-1 flex min-h-0 border-t border-[#c8c8c8]">
                  <div className="flex flex-col">
                    <SteelGrid />
                    <div className="mt-[4px] ml-[13px] w-[582px] h-[8px] rounded-full bg-[#c8c8c8]" />
                  </div>
                  <div className="flex-1 flex flex-col items-center">
                    <div className="mt-[21px] ml-[-2px] w-[8px] h-[67px] rounded-full bg-[#c8c8c8]" />
                    <div className="mt-auto w-full h-[15px] bg-[#efefef]" />
                  </div>
                </div>
              </div>
            </div>
          </div>
        </div>
        <div className="flex-1 flex justify-end items-start pr-[1px]">
          <svg width="7" height="6" viewBox="0 0 7 6"><path d="M5 0h2v2H5zM2 3h2v2H2zM5 3h2v2H5z" fill="#888" /></svg>
        </div>
      </div>
      <Widget />
    </div>
  );
}
